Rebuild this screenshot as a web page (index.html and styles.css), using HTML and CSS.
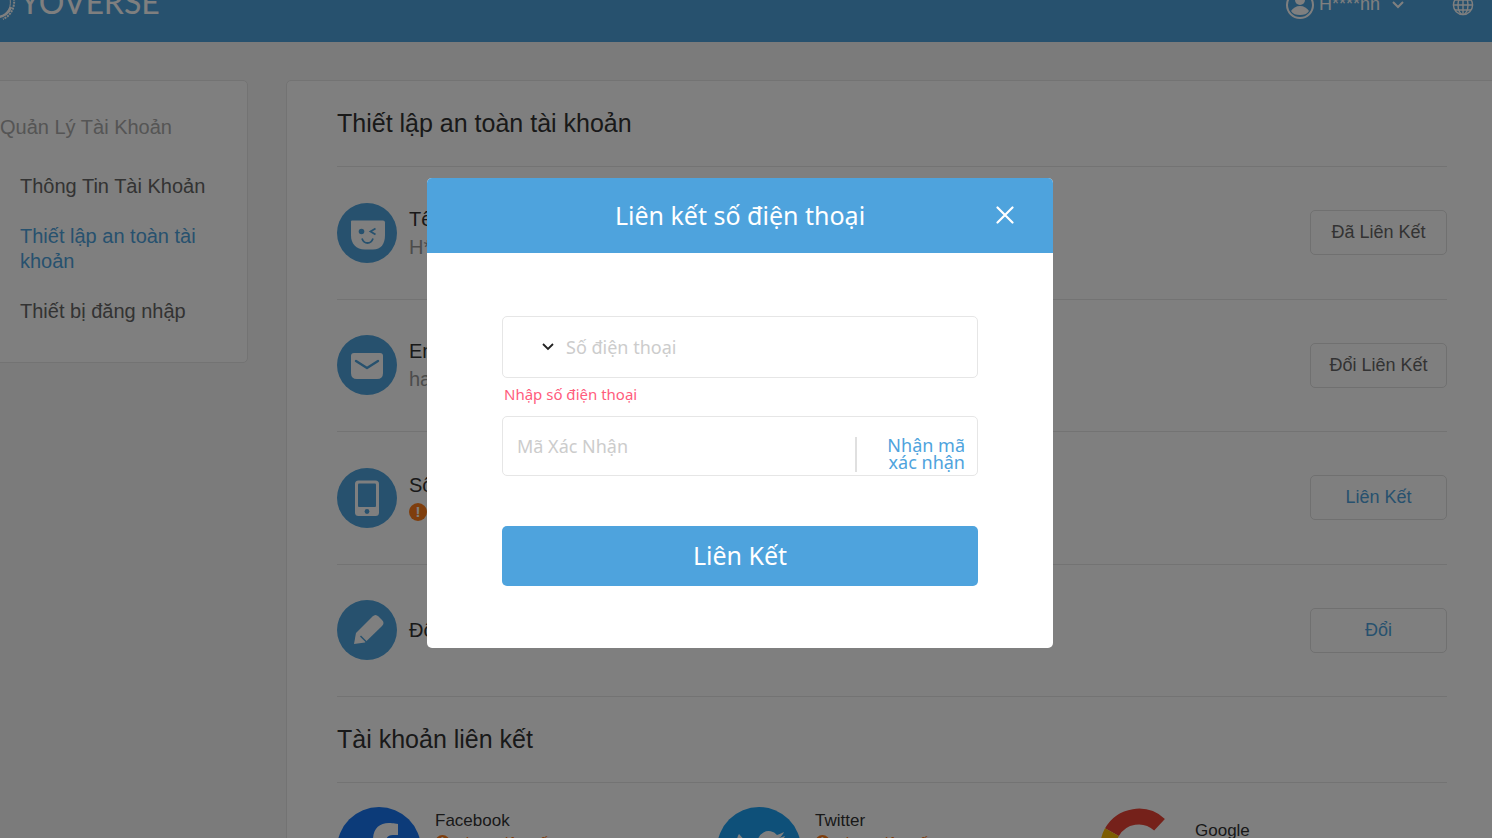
FILE: index.html
```html
<!DOCTYPE html>
<html lang="vi">
<head>
    <meta charset="UTF-8">
    <meta name="viewport" content="width=device-width, initial-scale=1.0">
    <title>Yoverse</title>
    <link rel="stylesheet" href="styles.css">
</head>
<body>
    <header class="header">
        <a class="logo" href="#">
            <svg width="38" height="38" viewBox="0 0 38 38" fill="none" stroke="#fff">
                <path d="M20 34c5 0 11-4 13-10" stroke-width="2.500"/>
                <path d="M34 10c5 9 1 22-9 26" stroke-width="2" stroke-dasharray="2 1"/>
                <path d="M31 12c3 8 1 16-5 20" stroke-width="1"/>
            </svg>
            <span>YOVERSE</span>
        </a>
        <div class="header-right">
            <button class="user" type="button">
                <svg width="30" height="30" viewBox="0 0 30 30">
                    <circle cx="15" cy="15" r="13" fill="none" stroke="#fff" stroke-width="2"/>
                    <circle cx="15" cy="10" r="5" fill="#fff"/>
                    <path d="M6 21c2-3 5-5 9-5s7 2 9 5c-2 3-5 4-9 4s-7-1-9-4z" fill="#fff"/>
                </svg>
                <span>H****nn</span>
                <svg class="arrow" width="12" height="8" viewBox="0 0 12 8" fill="none" stroke="#fff" stroke-width="2"><path d="M1 1l5 5 5-5"/></svg>
            </button>
            <button class="lang" type="button" aria-label="Ngôn ngữ">
                <svg width="22" height="22" viewBox="0 0 22 22" fill="none" stroke="#fff" stroke-width="1.4">
                    <circle cx="11" cy="11" r="9.6"/>
                    <ellipse cx="11" cy="11" rx="5" ry="9.6"/>
                    <path d="M11 1v20M1 11h20M3 6h16M3 16h16"/>
                </svg>
            </button>
        </div>
    </header>

    <div class="page">
        <aside class="sidebar">
            <div class="menu-title">Quản Lý Tài Khoản</div>
            <nav class="menu">
                <a href="#">Thông Tin Tài Khoản</a>
                <a href="#" class="active">Thiết lập an toàn tài khoản</a>
                <a href="#">Thiết bị đăng nhập</a>
            </nav>
        </aside>

        <main class="content">
            <h2>Thiết lập an toàn tài khoản</h2>
            <div class="rows">
                <div class="row">
                    <svg class="icon" viewBox="0 0 60 60">
                        <circle cx="30" cy="30" r="30" fill="#4ea3dd"/>
                        <path d="M15 17.500h31q2 0 2 2V32c0 9-4 14.500-12 14.500h-8c-9 0-14-6-14-14V18.500q0-1 1-1z" fill="#fff"/>
                        <circle cx="24.500" cy="28.500" r="2.800" fill="#4ea3dd"/>
                        <path d="M38.500 25.500l-5 3 5 3M25 35.500c2 6 9 6 11 0" fill="none" stroke="#4ea3dd" stroke-width="1.800"/>
                    </svg>
                    <div class="info">
                        <div class="name">Tên tài khoản</div>
                        <div class="value">H****nn</div>
                    </div>
                    <button class="btn" type="button">Đã Liên Kết</button>
                </div>
                <div class="row">
                    <svg class="icon" viewBox="0 0 60 60">
                        <circle cx="30" cy="30" r="30" fill="#4ea3dd"/>
                        <path d="M17 18h26q3 0 3 3v17q0 6-6 6H20q-6 0-6-6V21q0-3 3-3z" fill="#fff"/>
                        <path d="M19 26l11 7 11-7" fill="none" stroke="#4ea3dd" stroke-width="2.400" stroke-linecap="round" stroke-linejoin="round"/>
                    </svg>
                    <div class="info">
                        <div class="name">Email</div>
                        <div class="value">ha****</div>
                    </div>
                    <button class="btn" type="button">Đổi Liên Kết</button>
                </div>
                <div class="row">
                    <svg class="icon" viewBox="0 0 60 60">
                        <circle cx="30" cy="30" r="30" fill="#4ea3dd"/>
                        <rect x="18" y="12.500" width="24" height="35.500" rx="3.500" fill="#fff"/>
                        <rect x="21" y="15.500" width="18" height="23.500" rx="1" fill="#4ea3dd"/>
                        <circle cx="30" cy="43.500" r="2.400" fill="#4ea3dd"/>
                    </svg>
                    <div class="info">
                        <div class="name">Số điện thoại</div>
                        <div class="warn"><i>!</i>Chưa Liên Kết</div>
                    </div>
                    <button class="btn link" type="button">Liên Kết</button>
                </div>
                <div class="row">
                    <svg class="icon" viewBox="0 0 60 60">
                        <circle cx="30" cy="30" r="30" fill="#4ea3dd"/>
                        <path d="M35.500 16.500q3-3 6 0l3.500 3.500q3 3 0 6L28 42.500l-11 1.500 2-11z" fill="#fff"/>
                        <path d="M23.500 36l6 6" stroke="#4ea3dd" stroke-width="1.500"/>
                    </svg>
                    <div class="info">
                        <div class="name">Đổi mật khẩu</div>
                    </div>
                    <button class="btn link" type="button">Đổi</button>
                </div>
            </div>

            <h2>Tài khoản liên kết</h2>
            <div class="socials">
                <div class="social">
                    <svg width="84" height="84" viewBox="0 0 84 84">
                        <circle cx="42" cy="42" r="42" fill="#1877f2"/>
                        <path d="M36 84V54H26V42h10v-9c0-11 6-17 16-17 4 0 9 1 9 1v11h-5c-5 0-7 3-7 6v8h12l-2 12H49v30z" fill="#fff"/>
                    </svg>
                    <div class="info">
                        <div class="name">Facebook</div>
                        <div class="warn"><i>!</i>Chưa Liên Kết</div>
                    </div>
                </div>
                <div class="social">
                    <svg width="84" height="84" viewBox="0 0 84 84">
                        <circle cx="42" cy="42" r="42" fill="#1da1f2"/>
                        <path d="M68 29c-2 1-4 1-6 2 2-1 4-4 5-6-2 1-4 2-7 3a11 11 0 0 0-19 10c-9 0-14-5-19-11-4 6-1 12 3 15-2 0-4-1-5-1 0 5 4 9 9 10-2 1-3 1-5 0 1 5 6 8 11 8-5 4-10 5-17 5 24 13 46-4 46-29 2-2 3-4 4-6z" fill="#fff"/>
                    </svg>
                    <div class="info">
                        <div class="name">Twitter</div>
                        <div class="warn"><i>!</i>Chưa Liên Kết</div>
                    </div>
                </div>
                <div class="social google">
                    <svg width="84" height="84" viewBox="-3 -1 90 90" fill="none" stroke-width="17">
                        <path d="M13 26A33 33 0 0 1 64 18" stroke="#ea4335"/>
                        <path d="M13 58A33 33 0 0 1 13 26" stroke="#fbbc05"/>
                        <path d="M64 66A33 33 0 0 1 13 58" stroke="#34a853"/>
                        <path d="M42 43h32a32 32 0 0 1-10 23" stroke="#4285f4"/>
                    </svg>
                    <div class="info">
                        <div class="name">Google</div>
                    </div>
                </div>
            </div>
        </main>
    </div>

    <div class="mask">
        <div class="dialog" role="dialog" aria-labelledby="dialogTitle">
            <div class="dialog-header">
                <h3 id="dialogTitle">Liên kết số điện thoại</h3>
                <button class="close" type="button" aria-label="Đóng">
                    <svg width="18" height="18" viewBox="0 0 18 18" stroke="#fff" stroke-width="2.200" stroke-linecap="round"><path d="M1.500 1.500l15 15M16.500 1.500l-15 15"/></svg>
                </button>
            </div>
            <form class="dialog-body">
                <div class="field phone">
                    <button class="area" type="button" aria-label="Mã vùng">
                        <svg width="12" height="8" viewBox="0 0 12 8" fill="none" stroke="#222" stroke-width="1.800"><path d="M1 1l5 5 5-5"/></svg>
                    </button>
                    <input type="tel" aria-label="Số điện thoại" placeholder="Số điện thoại">
                </div>
                <p class="error">Nhập số điện thoại</p>
                <div class="field code">
                    <input type="text" aria-label="Mã Xác Nhận" placeholder="Mã Xác Nhận">
                    <button class="get-code" type="button">Nhận mã xác nhận</button>
                </div>
                <button class="submit" type="button">Liên Kết</button>
            </form>
        </div>
    </div>
</body>
</html>
```

FILE: styles.css
```css
* {margin: 0; padding: 0; box-sizing: border-box;}
body {
    font-family: "Liberation Sans", Arial, sans-serif;
    background: #f7f7f7;
    color: #333;
    height: 100vh;
    overflow: hidden;
}
button {
    font-family: inherit;
    background: none;
    border: none;
    cursor: pointer;
}
a {color: inherit; text-decoration: none;}
svg {flex: none;}

/* header */
.header {
    display: flex;
    justify-content: space-between;
    align-items: center;
    height: 75px;
    margin-top: -33px;
    padding-right: 18px;
    background: #4ea3dd;
    color: #fff;
}
.logo {
    display: flex;
    align-items: center;
    gap: 4px;
    margin-left: -22px;
    padding-bottom: 6px;
    font-family: Lato, sans-serif;
    font-size: 32px;
}
.header-right {display: flex; align-items: center; gap: 48px;}
.user {
    display: flex;
    align-items: center;
    gap: 4px;
    color: #fff;
    font-size: 18px;
}
.user .arrow {margin-left: 8px;}
.lang {display: flex;}

/* layout */
.page {
    display: flex;
    align-items: flex-start;
    gap: 38px;
    margin: 38px -6px 0 -50px;
}
.sidebar {
    flex: none;
    width: 298px;
    padding: 34px 40px 38px 49px;
    background: #fff;
    border: 1px solid #e6e6e6;
    border-radius: 5px;
    font-size: 20px;
    line-height: 25px;
}
.menu-title {margin-bottom: 34px; color: #aaa;}
.menu {
    display: flex;
    flex-direction: column;
    gap: 25px;
    padding-left: 20px;
    color: #666;
}
.menu .active {color: #4ea3dd;}

.content {
    flex: 1;
    padding: 0 50px 40px;
    background: #fff;
    border: 1px solid #e6e6e6;
    border-radius: 5px;
}
h2 {
    height: 86px;
    line-height: 85px;
    border-bottom: 1px solid #e6e6e6;
    font-size: 25px;
    font-weight: normal;
}
.rows {
    display: grid;
    grid-template-rows: repeat(4, 1fr);
    height: 530px;
}
.row {
    display: flex;
    align-items: center;
    gap: 12px;
    border-bottom: 1px solid #e6e6e6;
}
.icon {width: 60px; height: 60px;}
.info {flex: 1;}
.name {font-size: 20px; line-height: 28px;}
.value {font-size: 20px; line-height: 28px; color: #999;}
.warn {
    display: flex;
    align-items: center;
    gap: 5px;
    color: #ff7d1a;
    font-size: 15px;
    line-height: 26px;
}
.warn i {
    width: 18px;
    height: 18px;
    border-radius: 50%;
    background: #ff7d1a;
    color: #fff;
    font-size: 15px;
    font-style: normal;
    font-weight: bold;
    line-height: 18px;
    text-align: center;
}
.btn {
    width: 137px;
    height: 45px;
    border: 1px solid #e0e0e0;
    border-radius: 5px;
    color: #666;
    font-size: 18px;
}
.btn.link {color: #4ea3dd;}

.socials {
    display: grid;
    grid-template-columns: repeat(3, 1fr);
    gap: 30px;
    padding-top: 24px;
}
.social {display: flex; gap: 14px;}
.social .name {font-size: 17px;}
.social .warn {line-height: 15px;}
.social .warn i {width: 15px; height: 15px; font-size: 12px; line-height: 15px;}
.google .info {padding-top: 10px;}

/* dialog */
.mask {
    position: fixed;
    inset: 0;
    display: flex;
    align-items: center;
    justify-content: center;
    padding: 0 12px 12px 0;
    background: rgba(0,0,0,0.5);
}
.dialog {
    width: 626px;
    background: #fff;
    border-radius: 5px;
    overflow: hidden;
    font-family: "Noto Sans", "Open Sans", sans-serif;
}
.dialog-header {
    display: grid;
    grid-template-columns: 60px 1fr 60px;
    align-items: center;
    height: 75px;
    padding: 0 18px 2px;
    background: #4ea3dd;
    color: #fff;
}
h3 {
    grid-column: 2;
    font-size: 25px;
    font-weight: normal;
    text-align: center;
}
.close {display: flex; justify-content: center;}
.dialog-body {padding: 63px 75px 62px;}
.field {
    display: flex;
    border: 1px solid #e6e6e6;
    border-radius: 5px;
}
.field input {
    flex: 1;
    min-width: 0;
    border: none;
    outline: none;
    background: none;
    font-family: inherit;
    font-size: 18px;
}
.field input::placeholder {color: #ccc;}
.phone {height: 62px;}
.area {
    display: flex;
    align-items: center;
    justify-content: flex-end;
    width: 63px;
    padding-right: 12px;
}
.error {
    padding: 6px 2px 12px;
    color: #ff5c7c;
    font-size: 15px;
    line-height: 20px;
}
.code {height: 60px; padding: 0 12px 0 14px;}
.get-code {
    width: 110px;
    height: 35px;
    margin-top: 20px;
    padding: 0 0 2px 28px;
    border-left: 2px solid #e0e0e0;
    color: #4ea3dd;
    font-size: 18px;
    line-height: 17px;
    text-align: right;
}
.submit {
    width: 100%;
    height: 60px;
    margin-top: 50px;
    padding-bottom: 2px;
    border-radius: 5px;
    background: #4ea3dd;
    color: #fff;
    font-size: 25px;
}
```
